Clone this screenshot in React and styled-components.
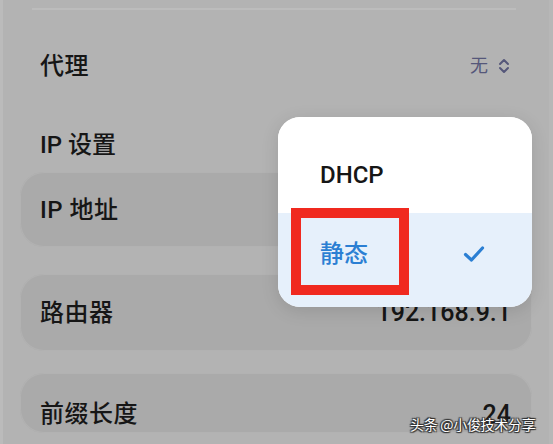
import React from "react";
import styled, { createGlobalStyle } from "styled-components";

const Global = createGlobalStyle`
  html, body { margin: 0; padding: 0; background: #b3b3b3; }
  body { width: 553px; height: 444px; overflow: hidden; font-family: "Roboto", "Noto Sans CJK SC", sans-serif; }
`;

const Page = styled.div`
  position: relative;
  width: 553px;
  height: 444px;
  box-sizing: border-box;
  border-left: 3px solid #bbbbbb;
  border-right: 4px solid #b7b7b7;
  background: #b3b3b3;
  overflow: hidden;
  color: #161616;
`;

const TopDivider = styled.div`
  margin: 8px 33px 0 29px;
  height: 2px;
  background: #bcbcbc;
`;

const Row = styled.div`
  display: flex;
  align-items: center;
  justify-content: space-between;
  height: ${(p) => p.$h}px;
  padding: 0 39px 0 37px;
`;

const Label = styled.span`
  font-size: 24px;
  font-weight: 500;
  letter-spacing: 0.5px;
  line-height: 1;
`;

const ValueWrap = styled.span`
  display: flex;
  align-items: center;
  gap: 10px;
  font-size: 18px;
  color: #55577a;
  line-height: 1;
`;

const SectionTitle = styled.div`
  margin-top: 6px;
  padding: 0 0 0 37px;
  height: 34px;
  display: flex;
  align-items: center;
  font-size: 24px;
  font-weight: 500;
  line-height: 1;
`;

const CardList = styled.div`
  display: flex;
  flex-direction: column;
  margin: 0 17px 0 17px;
  padding-top: 10px;
`;

const Card = styled.div`
  height: ${(p) => p.$h}px;
  margin-top: ${(p) => p.$mt || 0}px;
  border-radius: 24px;
  background: #aaaaaa;
  box-shadow: inset 0 0 0 1px #b2b2b2;
  display: flex;
  align-items: center;
  justify-content: space-between;
  padding: 0 21px 0 20px;
  padding-top: ${(p) => p.$pt || 0}px;
  box-sizing: border-box;
`;

const Value = styled.span`
  font-size: 25px;
  font-weight: 500;
  line-height: 1;
`;

const Popup = styled.div`
  position: absolute;
  left: 275px;
  top: 117px;
  width: 254px;
  height: 190px;
  border-radius: 22px;
  background: #ffffff;
  overflow: hidden;
  box-shadow: 0 4px 18px rgba(0, 0, 0, 0.12);
  display: flex;
  flex-direction: column;
`;

const Option = styled.div`
  height: ${(p) => p.$h}px;
  box-sizing: border-box;
  display: flex;
  align-items: center;
  justify-content: space-between;
  padding: ${(p) => p.$pt || 0}px 47px ${(p) => p.$pb || 0}px 42px;
  background: ${(p) => (p.$selected ? "#e6f0fb" : "#ffffff")};
  color: ${(p) => (p.$selected ? "#2b7fd3" : "#161616")};
  font-size: 24px;
  font-weight: 500;
  line-height: 1;
`;

const Highlight = styled.div`
  position: absolute;
  left: 288px;
  top: 208px;
  width: 118px;
  height: 87px;
  box-sizing: border-box;
  border: 10px solid #f0291f;
`;

const Watermark = styled.div`
  position: absolute;
  left: 407px;
  top: 414px;
  font-family: "Noto Sans CJK SC", sans-serif;
  font-size: 14px;
  color: #ffffff;
  letter-spacing: -0.3px;
  text-shadow: 0 0 1px #222, 1px 1px 1px #333, -1px -1px 1px #333, 1px -1px 1px #333, -1px 1px 1px #333;
`;

const UpDown = () => (
  <svg width="12" height="16" viewBox="0 0 12 16" fill="none" stroke="#55577a" strokeWidth="2" strokeLinecap="round" strokeLinejoin="round">
    <path d="M2 6 L6 2 L10 6" />
    <path d="M2 10 L6 14 L10 10" />
  </svg>
);

const Check = () => (
  <svg width="22" height="18" viewBox="0 0 22 18" fill="none" stroke="#2b7fd3" strokeWidth="3.2" strokeLinecap="round" strokeLinejoin="round">
    <path d="M2.5 9.5 L8.5 15 L19.5 3" />
  </svg>
);

export default function App() {
  return (
    <>
      <Global />
      <Page>
        <TopDivider />
        <Row $h={112}>
          <Label>代理</Label>
          <ValueWrap>
            无
            <UpDown />
          </ValueWrap>
        </Row>
        <SectionTitle>IP 设置</SectionTitle>
        <CardList>
          <Card $h={75}>
            <Label>IP 地址</Label>
          </Card>
          <Card $h={77} $mt={27}>
            <Label>路由器</Label>
            <Value>192.168.9.1</Value>
          </Card>
          <Card $h={60} $mt={22} $pt={22}>
            <Label>前缀长度</Label>
            <Value>24</Value>
          </Card>
        </CardList>
        <Popup>
          <Option $h={96} $pt={20}>DHCP</Option>
          <Option $h={94} $pb={12} $selected>
            <span>静态</span>
            <Check />
          </Option>
        </Popup>
        <Highlight />
        <Watermark>头条 @小俊技术分享</Watermark>
      </Page>
    </>
  );
}
